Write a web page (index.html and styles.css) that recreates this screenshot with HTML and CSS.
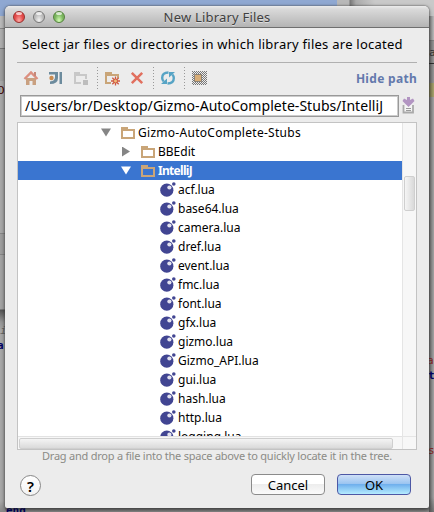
FILE: index.html
```html
<!DOCTYPE html>
<html lang="en">
<head>
<meta charset="utf-8">
<title>New Library Files</title>
<link rel="stylesheet" href="styles.css">
</head>
<body>
<svg class="defs" aria-hidden="true">
  <defs>
    <symbol id="folder" viewBox="0 0 14 12"><path d="M0 0H7V2H14V12H0ZM2 4V10H12V4Z" fill="#c9a578" fill-rule="evenodd"/></symbol>
    <symbol id="lua" viewBox="0 0 16 15"><circle cx="6.8" cy="8.2" r="6.6" fill="#414592"/><circle cx="9.4" cy="5.5" r="2.1" fill="#e2e2ef"/><circle cx="13.8" cy="2" r="1.8" fill="#414592"/></symbol>
  </defs>
</svg>
<div class="backdrop" aria-hidden="true">
  <div class="bg-top"></div><div class="bg-left"></div><div class="bg-right"></div>
  <span class="scrap s1">D</span><span class="scrap s2">i</span><span class="scrap s3">a</span><span class="scrap s4">end</span>
  <span class="scrap s5">a</span><span class="scrap s6">a</span><span class="scrap s7">t</span><span class="scrap s8">s</span>
</div>
<main class="dialog">
  <header class="titlebar">
    <div class="lights"><i class="light red"></i><i class="light grey"></i><i class="light green"></i></div>
    <h1>New Library Files</h1>
  </header>
  <p class="message">Select jar files or directories in which library files are located</p>
  <div class="toolbar">
    <svg class="ic home" width="16" height="16" viewBox="0 0 16 16"><path d="M3 8h10v7H9.500v-4h-3v4H3z" fill="#c9a080"/><path d="M1.500 9 8 2.500 14.500 9" fill="none" stroke="#dc8f80" stroke-width="2.400"/><path d="M11 2h2v4h-2z" fill="#c58878"/></svg>
    <svg class="ic project" width="16" height="16" viewBox="0 0 16 16"><path d="M1 2H10V8Q10 14 2 14V11.500Q7 11 7 7V4.500H1Z" fill="#6c8b9d"/><path d="M11.500 2h2.500v12h-2.500z" fill="#6c8b9d"/><circle cx="3.500" cy="8" r="2.200" fill="#c98b50"/></svg>
    <svg class="ic module" width="16" height="16" viewBox="0 0 16 16"><path d="M1 2h6v2h7v5h-2V6H3v6h5v2H1z" fill="#c8c8c8"/><path d="M10 10h5v5h-5z" fill="#bdbdbd"/></svg>
    <i class="sep"></i>
    <svg class="ic newfolder" width="16" height="16" viewBox="0 0 16 16"><path d="M0 2h7v2h7v4h-2V6H2v6h4v2H0z" fill="#c9a578"/><g stroke="#cf5a43" stroke-width="1.300"><path d="M10.500 6.500v9M6 11h9M7.300 7.800l6.400 6.400M13.700 7.800l-6.400 6.400"/></g><circle cx="10.500" cy="11" r="2" fill="#f0bd7a" stroke="#cf5a43"/></svg>
    <svg class="ic delete" width="16" height="16" viewBox="0 0 16 16"><path d="M2.800 2.800l10.400 10.400M13.200 2.800 2.800 13.200" stroke="#e1705f" stroke-width="2.500"/></svg>
    <i class="sep sep2"></i>
    <svg class="ic refresh" width="16" height="16" viewBox="0 0 16 16"><g fill="none" stroke="#57a4c5" stroke-width="2.400"><path d="M8.500 2.500Q2.200 2.500 2.200 8q0 2 1.500 3.500"/><path d="M7.500 13.500Q13.800 13.500 13.800 8q0-2-1.500-3.500"/></g><path d="M7 8.500V14H1ZM9 7.500V2H15Z" fill="#57a4c5"/></svg>
    <i class="sep sep3"></i>
    <svg class="ic hidden" width="16" height="16" viewBox="0 0 16 16"><defs><pattern id="dots" width="2" height="2" patternUnits="userSpaceOnUse"><path d="M0 0h1v1H0zM1 1h1v1H1z" fill="#777"/></pattern></defs><path d="M1 1h15v14H1z" fill="url(#dots)"/><path d="M3.500 4.500h7v7h-7z" fill="#d8ad77" stroke="#8b8378"/></svg>
    <a class="hide">Hide path</a>
  </div>
  <div class="pathrow">
    <div class="path"><span>/Users/br/Desktop/Gizmo-AutoComplete-Stubs/IntelliJ</span></div>
    <svg class="recent" width="13" height="17" viewBox="0 0 13 17"><path d="M1.500 8v7.500h9.500V8" fill="#f4f4f4" stroke="#aaa" stroke-width="1.800"/><path d="M4 11.500h5M4 13.500h5" stroke="#999"/><path d="M5 0h3v3l3-1.500 1.500 2.500-6 6L.5 4 2 1.500 5 3Z" fill="#b295c2"/></svg>
  </div>
  <section class="tree">
    <div class="rows">
      <div class="row l0"><i class="open"></i><svg class="folder"><use href="#folder"/></svg><span class="root">Gizmo-AutoComplete-Stubs</span></div>
      <div class="row l1"><i class="closed"></i><svg class="folder"><use href="#folder"/></svg><span>BBEdit</span></div>
      <div class="row l1 selected"><i class="open"></i><svg class="folder"><use href="#folder"/></svg><span>IntelliJ</span></div>
      <div class="row file"><svg><use href="#lua"/></svg><span>acf.lua</span></div>
      <div class="row file"><svg><use href="#lua"/></svg><span>base64.lua</span></div>
      <div class="row file"><svg><use href="#lua"/></svg><span>camera.lua</span></div>
      <div class="row file"><svg><use href="#lua"/></svg><span>dref.lua</span></div>
      <div class="row file"><svg><use href="#lua"/></svg><span>event.lua</span></div>
      <div class="row file"><svg><use href="#lua"/></svg><span>fmc.lua</span></div>
      <div class="row file"><svg><use href="#lua"/></svg><span>font.lua</span></div>
      <div class="row file"><svg><use href="#lua"/></svg><span>gfx.lua</span></div>
      <div class="row file"><svg><use href="#lua"/></svg><span>gizmo.lua</span></div>
      <div class="row file"><svg><use href="#lua"/></svg><span>Gizmo_API.lua</span></div>
      <div class="row file"><svg><use href="#lua"/></svg><span>gui.lua</span></div>
      <div class="row file"><svg><use href="#lua"/></svg><span>hash.lua</span></div>
      <div class="row file"><svg><use href="#lua"/></svg><span>http.lua</span></div>
      <div class="row file"><svg><use href="#lua"/></svg><span>logging.lua</span></div>
    </div>
    <div class="vbar"><i></i></div>
    <div class="hbar"><i></i></div>
    <div class="corner"></div>
  </section>
  <p class="hint">Drag and drop a file into the space above to quickly locate it in the tree.</p>
  <footer>
    <button class="help">?</button>
    <button class="btn">Cancel</button>
    <button class="btn ok">OK</button>
  </footer>
</main>
</body>
</html>
```
FILE: styles.css
```css
* { box-sizing: border-box; }
body { margin: 0; width: 434px; height: 512px; overflow: hidden; position: relative; background: #999; font: 12px/19px "Noto Sans", "Open Sans", sans-serif; color: #000; }
.defs { position: absolute; width: 0; height: 0; }
.backdrop { position: absolute; inset: 0; overflow: hidden; background: linear-gradient(#aaa 0 504px, #777 508px, #929292 512px); }
.bg-top { position: absolute; top: 0; left: 0; width: 434px; height: 16px; background: linear-gradient(90deg, #8fa8d2 0 337px, #b8b8b8 337px 349px, #777 350px, #aaa 356px, #c9c9c9 375px); }
.bg-left { position: absolute; top: 16px; left: 0; width: 5px; height: 496px; background: linear-gradient(#bbb 0 12px, #888 12px 13px, #b0b0b0 13px 32px, #777 32px 33px, #a0a0a0 33px 65px, #aaa 65px 217px, #888 217px 218px, #a0a0a0 218px 238px, #888 238px 239px, #a5a5a5 239px 293px, #555 294px, #999 306px, #aaa 315px 485px, #888 496px); }
.bg-right { position: absolute; top: 16px; left: 429px; width: 5px; height: 496px; background: linear-gradient(90deg, rgba(0,0,0,.3), transparent), linear-gradient(#bbb 0 24px, #888 24px 25px, #999 25px 47px, #333 47px 48px, #999 48px 67px, #aaa56e 67px 81px, #a5a5a5 81px 481px, #777 496px); }
.scrap { position: absolute; line-height: 12px; font-size: 11px; font-family: "DejaVu Sans Mono", monospace; }
.s1 { left: -2px; top: 85px; color: #400; }
.s2 { left: 0; top: 325px; color: #666; font-style: italic; }
.s3 { left: -3px; top: 340px; color: #006; font-weight: bold; }
.s4 { left: 6px; top: 505px; color: #006; font-weight: bold; }
.s5 { left: 429px; top: 47px; color: #333; }
.s6 { left: 427px; top: 355px; color: #822; }
.s7 { left: 428px; top: 370px; color: #006; font-weight: bold; }
.s8 { left: 428px; top: 445px; color: #822; }
.dialog { position: relative; margin: 6px 0 0 5px; width: 424px; height: 502px; background: #ececec; border-radius: 5px 5px 2px 2px; box-shadow: 0 0 2px #444, 0 2px 5px rgba(0,0,0,.5); overflow: hidden; display: flex; flex-direction: column; }
.titlebar { flex: none; height: 22px; display: flex; align-items: center; background: linear-gradient(#ececec, #dadada 3px, #b4b4b4); border-bottom: 1px solid #6f6f6f; }
.lights { display: flex; gap: 8px; width: 70px; padding-left: 8px; }
.light { width: 12px; height: 12px; border-radius: 50%; border: 1px solid #777; background: radial-gradient(ellipse at 50% 90%, #f5f5f5, #bbb 60%); }
.light::before { content: ""; display: block; width: 6px; height: 3px; margin: 0 auto; border-radius: 50%; background: rgba(255,255,255,.7); }
.red { border-color: #97312e; background: radial-gradient(ellipse at 50% 90%, #ffaaa5, #e24848 60%); }
.green { border-color: #54813e; background: radial-gradient(ellipse at 50% 90%, #d4ffb5, #79b45d 60%); }
h1 { margin: 0; width: 284px; text-align: center; font-size: 13px; letter-spacing: .2px; font-weight: 400; color: #404040; line-height: 20px; text-shadow: 0 1px #ddd; white-space: nowrap; }
.message { margin: 6px 12px 0; padding-left: 5px; height: 29px; line-height: 20px; font-size: 13px; letter-spacing: .25px; border-bottom: 1px solid #b0b0b0; white-space: nowrap; }
.toolbar { flex: none; height: 32px; margin: 0 12px; display: flex; align-items: center; padding-left: 6px; padding-bottom: 2px; }
.ic { flex: none; margin-right: 8px; }
.home { margin-right: 9px; }
.project { margin-right: 9px; }
.sep { width: 2px; height: 23px; margin-right: 6px; background: repeating-linear-gradient(#999 0 1px, transparent 1px 3px) 0 0 / 1px 100% no-repeat; }
.sep2, .sep3 { margin-right: 5px; }
.hide { margin-left: auto; font-weight: 700; letter-spacing: .3px; color: #6379ac; white-space: nowrap; }
.pathrow { flex: none; display: flex; height: 22px; margin-left: 15px; }
.path { width: 379px; height: 22px; border: 1px solid #999; box-shadow: inset 0 0 0 1px #ccc; background: #fff; padding-left: 4px; font-size: 14px; letter-spacing: .05px; line-height: 20px; white-space: nowrap; }
.recent { margin: 2px 0 0 3px; }
.tree { flex: none; width: 400px; height: 328px; margin: 5px 0 0 12px; border: 1px solid #c3c3c3; background: #fff; display: grid; grid-template-columns: 384px 14px; grid-template-rows: 313px 13px; }
.rows { overflow: hidden; }
.row { height: 19px; display: flex; align-items: center; white-space: nowrap; }
.row svg { flex: none; }
.l0 { padding-left: 83px; }
.l1 { padding-left: 103px; }
.root { letter-spacing: .28px; }
.row i { flex: none; width: 10px; height: 10px; margin-right: 10px; background: #858585; }
.open { clip-path: polygon(0 10%, 100% 10%, 50% 90%); }
.closed { clip-path: polygon(10% 0, 90% 50%, 10% 100%); }
.folder { width: 14px; height: 12px; margin-right: 3px; }
.selected { color: #fff; background: #3a75d0; font-weight: 700; letter-spacing: -.7px; }
.selected i { background: #fff; }
.file { padding-left: 142px; }
.file svg { width: 16px; height: 15px; margin-right: 2px; }
.vbar { background: #f7f7f7; border-left: 1px solid #e5e5e5; padding: 53px 1px 0; }
.vbar i { display: block; height: 35px; border: 1px solid #cfcfcf; border-radius: 2px; background: linear-gradient(90deg, #f5f5f5, #d9d9d9); }
.hbar { background: #f7f7f7; border-top: 1px solid #e2e2e2; padding: 1px 9px 0 1px; }
.hbar i { display: block; height: 11px; border: 1px solid #cfcfcf; border-radius: 2px; background: linear-gradient(#f4f4f4, #dadada); }
.corner { background: #f7f7f7; border: solid #e5e5e5; border-width: 1px 0 0 1px; }
.hint { margin: 0; height: 13px; padding-left: 37px; font-size: 11px; letter-spacing: -.23px; line-height: 12px; color: #8b8b86; white-space: nowrap; }
footer { display: flex; align-items: flex-start; padding: 11px 18px 0 15px; }
button { font-family: inherit; padding: 0; color: #000; }
.help { width: 21px; height: 21px; margin: 1px auto 0 0; border: 1px solid #888; border-radius: 50%; background: linear-gradient(#fff, #f3f3f3); font-size: 15px; font-weight: 600; line-height: 18px; }
.btn { width: 74px; height: 21px; margin-left: 12px; border: 1px solid #8b8b8b; border-radius: 4px; background: linear-gradient(#fff 45%, #ededed 50%, #fbfbfb); font-size: 13px; line-height: 18px; }
.ok { border-color: #4d58a5; background: linear-gradient(#cfe0f7, #9cc5f1 45%, #70b0ed 50%, #b5ecff); }
```
